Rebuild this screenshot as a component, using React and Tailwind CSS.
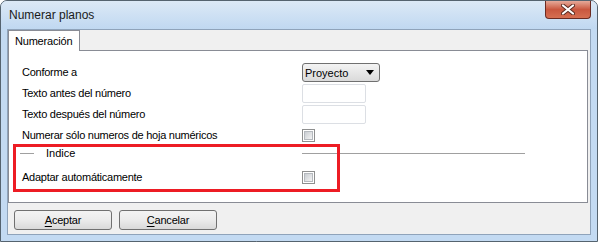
import React from 'react';

const font = { fontFamily: '"Liberation Sans", Arial, sans-serif' };

function Checkbox() {
  return (
    <div className="flex h-[13px] w-[13px] items-center justify-center border border-[#8e8f8f] bg-white">
      <div className="h-[9px] w-[9px] border border-[#b5b9be] bg-linear-to-br from-[#c9cdd2] to-[#f4f4f4]" />
    </div>
  );
}

function TextBox() {
  return <div className="h-[19px] w-[64px] rounded-[2px] border border-[#dcdfe4] bg-white" />;
}

function Row({ label, children }) {
  return (
    <div className="flex h-[21px] items-center">
      <div className="mb-[2px] w-[280px] text-[11px] leading-[14px] tracking-[-0.25px] text-black">{label}</div>
      <div className="flex items-center">{children}</div>
    </div>
  );
}

function WinButton({ first, rest }) {
  return (
    <button className="flex h-[20px] w-[98px] items-center justify-center rounded-[3px] border border-[#707070] bg-linear-to-b from-[#f3f3f3] via-[#ebebeb] to-[#d9d9d9] text-[11px] leading-[14px] tracking-[-0.2px] text-black">
      <span className="underline underline-offset-2">{first}</span>
      {rest}
    </button>
  );
}

export default function App() {
  return (
    <div className="h-[242px] w-[598px] bg-white" style={font}>
      <div className="flex h-full flex-col rounded-t-[7px] border border-[#55636f] bg-[#c3daf2]">
        {/* title bar */}
        <div className="flex h-[28px] items-start rounded-t-[6px] bg-linear-to-b from-[#dce9f6] to-[#c0d8f1]">
          <div className="mt-[7px] pl-[8px] text-[12px] leading-[14px] text-[#1a1a1a]">Numerar planos</div>
          <button className="ml-auto mr-[6px] flex h-[18px] w-[46px] items-center justify-center rounded-b-[4px] border border-t-0 border-[#6b2b22] bg-linear-to-b from-[#e5a999] via-[#c9573f] to-[#d66f52]">
            <svg width="14" height="11" viewBox="0 0 14 11">
              <path d="M2 1.5 L12 9.5 M12 1.5 L2 9.5" stroke="#5a2a20" strokeWidth="4" strokeLinecap="round" />
              <path d="M2 1.5 L12 9.5 M12 1.5 L2 9.5" stroke="#ffffff" strokeWidth="2.2" strokeLinecap="round" />
            </svg>
          </button>
        </div>

        {/* client area */}
        <div className="mx-[6px] mb-[6px] flex flex-1 flex-col border border-[#8fa3ba] bg-[#f0f0f0]">
          <div className="flex">
            <div className="relative z-10 -mb-px flex h-[21px] w-[72px] items-start border border-b-0 border-[#898c95] bg-white pl-[6px] pt-[3px] text-[11px] leading-[14px] tracking-[-0.2px] text-black">
              Numeración
            </div>
          </div>
          <div className="relative mr-[2px] h-[153px] border border-[#898c95] bg-white pl-[13px] pt-[11px]">
            <Row label="Conforme a">
              <div className="flex h-[19px] w-[78px] items-center justify-between rounded-[3px] border border-[#707070] bg-linear-to-b from-[#f3f3f3] to-[#dadada] pl-[2px] pr-[5px] text-[11px] leading-[14px] text-black">
                <span>Proyecto</span>
                <svg width="8" height="5" viewBox="0 0 8 5">
                  <path d="M0 0 H8 L4 5 Z" fill="#000" />
                </svg>
              </div>
            </Row>
            <Row label="Texto antes del número">
              <TextBox />
            </Row>
            <Row label="Texto después del número">
              <TextBox />
            </Row>
            <Row label="Numerar sólo numeros de hoja numéricos">
              <Checkbox />
            </Row>
            <div className="flex h-[21px] items-start">
              <div className="flex w-[280px] items-start">
                <div className="ml-[-2px] mt-[7px] h-px w-[14px] bg-[#a0a0a0]" />
                <div className="ml-[12px] text-[11px] leading-[14px] text-black">Indice</div>
              </div>
              <div className="mt-[7px] h-px w-[223px] bg-[#a0a0a0]" />
            </div>
            <Row label="Adaptar automáticamente">
              <Checkbox />
            </Row>
            <div className="absolute left-[4px] top-[93px] h-[48px] w-[327px] border-[3px] border-[#ed1c24]" />
          </div>
          <div className="ml-[6px] mt-[7px] flex gap-[7px]">
            <WinButton first="A" rest="ceptar" />
            <WinButton first="C" rest="ancelar" />
          </div>
        </div>
      </div>
    </div>
  );
}
